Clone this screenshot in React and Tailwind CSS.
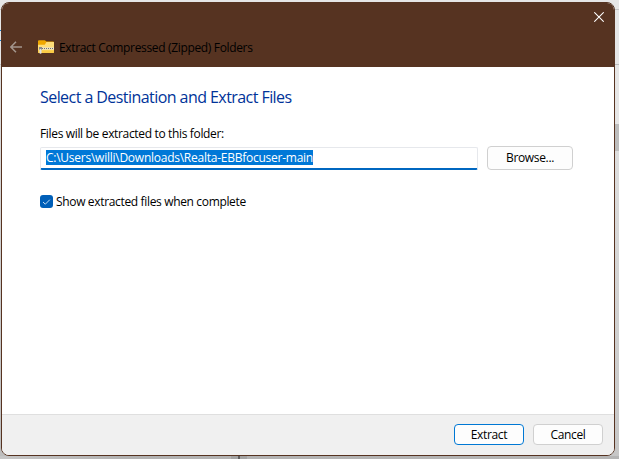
import React from "react";

function ZipFolderIcon() {
  return (
    <svg width="16" height="14" viewBox="0 0 16 14">
      <path d="M0 1.2Q0 .2 1 .2H6.6Q7.2 .2 7.6 .7L8.4 1.5H15Q16 1.5 16 2.5V7H0Z" fill="#f0a800" />
      <path d="M0 4.8H6.8L8.4 2H16V12Q16 13 15 13H1Q0 13 0 12Z" fill="#ffde78" />
      <path d="M0 10.3H16V12Q16 13 15 13H1Q0 13 0 12Z" fill="#fbcb45" />
      <path d="M3 8.5H16" stroke="#e6e3da" strokeWidth="2" />
      <path d="M4 8.5H16" stroke="#77736a" strokeWidth="1" strokeDasharray="1 1" />
      <rect x="1" y="7" width="3" height="3" fill="#8d8d8d" />
      <rect x="1.5" y="9" width="2" height="4.8" rx=".8" fill="#e4e4e4" />
    </svg>
  );
}

function Desktop() {
  return (
    <div className="absolute inset-0 bg-[#e6e6e6]">
      <div className="absolute left-0 top-[9px] h-px w-1 bg-[#c8c8c8]" />
      <div className="absolute left-0 top-[30px] h-px w-1 bg-[#1580d0]" />
      <div className="absolute left-0 top-[40px] h-px w-1 bg-[#1580d0]" />
      <div className="absolute left-0 top-[64px] h-px w-1 bg-[#c4c4c4]" />
      <div className="absolute left-0 top-[65px] h-[394px] w-4 bg-linear-to-b from-[#dedede] to-[#bdbdbd]" />
      <div className="absolute right-0 top-[9px] h-px w-2 bg-[#c4c4c4]" />
      <div className="absolute right-0 top-[64px] h-px w-2 bg-[#bcbcbc]" />
      <div className="absolute right-0 top-[124px] h-[27px] w-2 bg-[#bdbdbd]" />
      <div className="absolute right-0 top-[151px] h-[308px] w-4 bg-linear-to-b from-[#dedede] to-[#c6c6c6]" />
      <div className="absolute bottom-0 left-0 h-[3px] w-full bg-linear-to-r from-[#c6c6c6] via-[#b2b2b2] via-20% to-[#b5b5b5]" />
      <div className="absolute bottom-0 left-[231px] h-[3px] w-[16px] bg-[#a3a3a3]" />
      <div className="absolute bottom-0 left-[238px] h-[3px] w-[2px] bg-[#5e5e5e]" />
    </div>
  );
}

export default function App() {
  return (
    <div className="relative h-[459px] w-[619px] overflow-hidden font-['Open_Sans','Noto_Sans',sans-serif] text-[12px] leading-4 tracking-[-0.34px] text-black">
      <Desktop />
      <div className="absolute left-px top-[2px] flex h-[454px] w-[614px] flex-col overflow-hidden rounded-[8px] border border-[#563321] bg-white">
        <header className="flex h-[64px] shrink-0 flex-col bg-[#563321]">
          <div className="flex h-7 justify-end pr-[10px] pt-[9px]">
            <svg width="10" height="10" viewBox="0 0 10 10" fill="none" stroke="#fff" strokeWidth="1.05">
              <path d="M.3.3 9.7 9.7M9.7.3.3 9.7" />
            </svg>
          </div>
          <div className="flex h-8 items-center pl-2">
            <svg width="12" height="12" viewBox="0 0 12 12" fill="none" stroke="#a3958c" strokeWidth="1.5">
              <path d="M6 .8.9 6 6 11.2M.9 6H12" />
            </svg>
            <span className="ml-4 flex">
              <ZipFolderIcon />
            </span>
            <span className="ml-[5px] mt-[2px] whitespace-nowrap">Extract Compressed (Zipped) Folders</span>
          </div>
        </header>
        <main className="flex min-h-0 flex-1 flex-col items-start pl-[38px] pt-[19px]">
          <h1 className="whitespace-nowrap text-[16px] leading-[22px] tracking-[-0.56px] text-[#003399]">Select a Destination and Extract Files</h1>
          <p className="mt-[18px] whitespace-nowrap">Files will be extracted to this folder:</p>
          <div className="mt-[4px] flex items-center gap-[9px]">
            <div className="flex h-[23px] w-[438px] items-start rounded-[2px] border border-b-2 border-[#e6e8ec] border-b-[#0067c0] pl-[5px] pt-[2px]">
              <span className="h-[15px] w-[267px] whitespace-nowrap bg-[#0078d7] leading-[15px] tracking-[-0.25px] text-white">
                C:\Users\willi\Downloads\Realta-EBBfocuser-main
              </span>
            </div>
            <button className="flex h-6 w-[86px] items-center justify-center rounded-[4px] border border-[#d0d0d0] bg-[#fdfdfd]">Browse...</button>
          </div>
          <label className="mt-[23px] flex items-center gap-[3px]">
            <span className="flex size-[13px] items-center justify-center rounded-[3px] bg-[#005fb8]">
              <svg width="9" height="8" viewBox="0 0 9 8" fill="none" stroke="#c8e0f5" strokeWidth="1">
                <path d="M1 4 3.3 6.2 7.8 1.7" />
              </svg>
            </span>
            <span className="mt-px whitespace-nowrap">Show extracted files when complete</span>
          </label>
        </main>
        <footer className="flex h-[41px] shrink-0 items-start justify-end gap-[9px] border-t border-[#dfdfdf] bg-[#f0f0f0] pr-[11px] pt-[9px]">
          <button className="flex h-[21px] w-[70px] items-center justify-center rounded-[4px] border border-[#0078d4] bg-[#fdfdfd]">Extract</button>
          <button className="flex h-[21px] w-[70px] items-center justify-center rounded-[4px] border border-[#d0d0d0] bg-[#fdfdfd]">Cancel</button>
        </footer>
      </div>
    </div>
  );
}
